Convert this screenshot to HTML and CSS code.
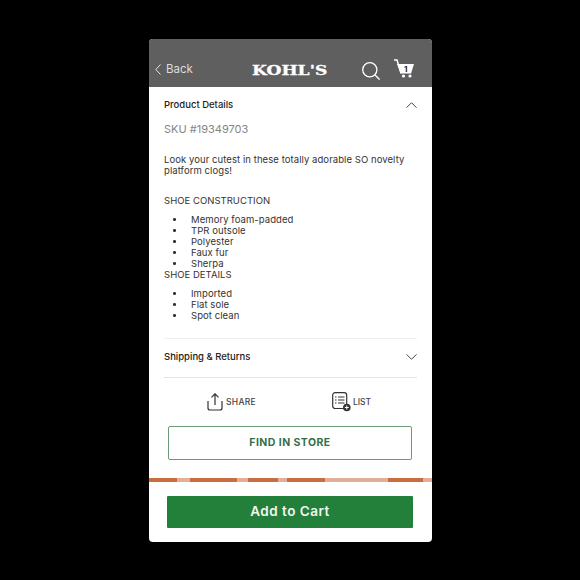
FILE: index.html
```html
<!DOCTYPE html>
<html lang="en">
  <head>
    <meta charset="UTF-8" />
    <title>Kohl's Product Details</title>
    <link rel="stylesheet" href="styles.css">
  </head>
  <body>
    <div class="phone">
      <header class="top-bar">
        <a class="back">
          <svg width="6" height="11" viewBox="0 0 6 11"><path d="M5.5.5.8 5.5l4.7 5" fill="none" stroke="#e6e6e6" stroke-width="1"/></svg>
          <span>Back</span>
        </a>
        <div class="logo"><span>KOHL'S</span></div>
        <div class="top-icons">
          <svg class="search" width="18" height="18" viewBox="0 0 18 18"><circle cx="7.8" cy="7.8" r="7.1" fill="none" stroke="#fff" stroke-width="1.3"/><path d="M12.8 12.8 17.6 17.6" stroke="#fff" stroke-width="1.3" fill="none"/></svg>
          <div class="cart">
            <svg width="20" height="19" viewBox="0 0 20 19"><path d="M3 5H20L17 14.5H7Z" fill="#fff"/><path d="M0 1H3L7 14.5" fill="none" stroke="#fff" stroke-width="1.5"/><circle cx="9.5" cy="17" r="1.6" fill="#fff"/><circle cx="16" cy="17" r="1.6" fill="#fff"/></svg>
            <span class="cart-count">1</span>
          </div>
        </div>
      </header>

      <main class="content">
        <section class="details">
          <div class="section-head">
            <h2>Product Details</h2>
            <svg width="11" height="6" viewBox="0 0 11 6"><path d="M.5 5.7 5.5.7l5 5" fill="none" stroke="#444" stroke-width="1"/></svg>
          </div>
          <p class="sku">SKU #19349703</p>
          <p class="intro">Look your cutest in these totally adorable SO novelty platform clogs!</p>
          <p class="spec-title first">SHOE CONSTRUCTION</p>
          <ul class="spec-list">
            <li>Memory foam-padded</li>
            <li>TPR outsole</li>
            <li>Polyester</li>
            <li>Faux fur</li>
            <li>Sherpa</li>
          </ul>
          <p class="spec-title">SHOE DETAILS</p>
          <ul class="spec-list">
            <li>Imported</li>
            <li>Flat sole</li>
            <li>Spot clean</li>
          </ul>
        </section>

        <section class="shipping">
          <h2>Shipping &amp; Returns</h2>
          <svg width="11" height="6" viewBox="0 0 11 6"><path d="M.5.3l5 5 5-5" fill="none" stroke="#444" stroke-width="1"/></svg>
        </section>

        <div class="actions">
          <a class="action share">
            <svg width="16" height="18" viewBox="0 0 16 18"><path d="M8 12V1M4.5 4.3 8 .8l3.5 3.5M1 8v7a2 2 0 0 0 2 2h10a2 2 0 0 0 2-2V8" fill="none" stroke="#333" stroke-width="1.2"/></svg>
            <span>SHARE</span>
          </a>
          <a class="action list">
            <svg width="19" height="20" viewBox="0 0 19 20"><rect x=".7" y=".7" width="14" height="15.8" rx="2.5" fill="none" stroke="#333" stroke-width="1.2"/><path d="M6 5h6.5M6 8h6.5M6 11h6.5M3 5h1.5M3 8h1.5M3 11h1.5" stroke="#333" stroke-width="1.2"/><circle cx="14.8" cy="15.5" r="3.8" fill="#333"/><path d="M12.8 15.5h4M14.8 13.5v4" stroke="#fff" stroke-width="1"/></svg>
            <span>LIST</span>
          </a>
        </div>

        <a class="find-store">FIND IN STORE</a>
      </main>

      <div class="promo-strip"></div>
      <footer class="cart-footer">
        <a class="add-to-cart">Add to Cart</a>
      </footer>
    </div>
  </body>
</html>
```

FILE: styles.css
```css
* {
  padding: 0;
  margin: 0;
  box-sizing: border-box;
}

body {
  background: #000;
  min-height: 100vh;
  padding: 39px 0 0 149px;
  font-family: "Inter", "Liberation Sans", sans-serif;
  color: #333;
}

.phone {
  width: 283px;
  height: 503px;
  background: #fff;
  border-radius: 4px;
  overflow: hidden;
  display: flex;
  flex-direction: column;
}

.top-bar {
  height: 48px;
  flex-shrink: 0;
  background: #5f5f5f;
  display: flex;
  align-items: flex-end;
  padding: 0 14px 7px 6px;
}

.back {
  display: flex;
  align-items: center;
  gap: 5px;
  width: 97px;
  margin-bottom: 2px;
  color: #dcdcdc;
  font-size: 11.5px;
  line-height: 17px;
}

.logo {
  width: 100px;
  margin-bottom: 1px;
  font-family: "DejaVu Serif", serif;
  font-weight: 700;
  font-size: 13.5px;
  line-height: 17px;
  color: #fff;
}

/* the wordmark is much wider than any installed face */
.logo span {
  display: inline-block;
  transform: scaleX(1.27);
  transform-origin: left center;
  -webkit-text-stroke: 0.3px #fff;
}

.top-icons {
  display: flex;
  align-items: flex-end;
  gap: 14px;
  margin-left: 10px;
}

.search {
  display: block;
}

.cart {
  position: relative;
  height: 19px;
  margin-bottom: 2px;
}

.cart svg {
  display: block;
}

.cart-count {
  position: absolute;
  left: 10px;
  top: 4.5px;
  font-size: 8px;
  line-height: 10px;
  font-weight: 700;
  color: #222;
}

.content {
  flex: 1;
  padding: 0 15px;
}

h2 {
  font-size: 9.5px;
  line-height: 12px;
  font-weight: 500;
  color: #222;
}

.details {
  border-bottom: 1px solid #f0f0f0;
  padding-bottom: 16.5px;
}

.section-head {
  display: flex;
  justify-content: space-between;
  align-items: center;
  height: 36px;
}

.sku {
  margin-top: -1px;
  font-size: 11px;
  line-height: 14px;
  color: #858585;
}

.intro {
  margin-top: 18px;
  font-size: 9.5px;
  line-height: 11px;
  letter-spacing: 0.07px;
}

.spec-title {
  font-size: 9.5px;
  line-height: 11px;
  letter-spacing: 0.03px;
}

.spec-title.first {
  margin-top: 19px;
}

.spec-list {
  list-style: none;
  margin-top: 8px;
}

.spec-list li {
  position: relative;
  padding-left: 27px;
  font-size: 9.5px;
  line-height: 11px;
  letter-spacing: 0.07px;
}

.spec-list li::before {
  content: "";
  position: absolute;
  left: 9px;
  top: 4px;
  width: 2.5px;
  height: 2.5px;
  border-radius: 50%;
  background: #333;
}

.shipping {
  height: 39px;
  padding-bottom: 2px;
  display: flex;
  justify-content: space-between;
  align-items: center;
  border-bottom: 1px solid #e4e4e4;
}

.actions {
  display: flex;
  height: 48px;
  align-items: center;
  padding-left: 43px;
}

.action {
  display: flex;
  align-items: center;
  gap: 3px;
  font-size: 8.5px;
  font-weight: 500;
  letter-spacing: 0.3px;
  color: #444;
}

.action svg {
  display: block;
}

.share {
  width: 125px;
}

.list {
  gap: 2px;
  letter-spacing: 0;
}

.find-store {
  display: block;
  margin: 0 5px 0 4px;
  height: 34px;
  border: 1px solid #6d9a78;
  border-radius: 2px;
  text-align: center;
  font-size: 10.5px;
  line-height: 32px;
  font-weight: 700;
  letter-spacing: 0.45px;
  color: #35704a;
}

.promo-strip {
  height: 4px;
  flex-shrink: 0;
  background: linear-gradient(90deg, #c96d42 0 28px, #e2b097 28px 41px, #c96d42 41px 88px, #e2b097 88px 99px, #c96d42 99px 129px, #e2b097 129px 138px, #c96d42 138px 176px, #e2b097 176px 239px, #c96d42 239px 274px, #e2b097 274px);
}

.cart-footer {
  height: 60px;
  flex-shrink: 0;
  padding: 14px 19px 0 18px;
}

.add-to-cart {
  display: block;
  height: 32px;
  background: #23803a;
  border-radius: 1px;
  text-align: center;
  color: #f2f6f2;
  font-size: 13.5px;
  line-height: 31px;
  font-weight: 600;
  letter-spacing: 0.5px;
}
```
